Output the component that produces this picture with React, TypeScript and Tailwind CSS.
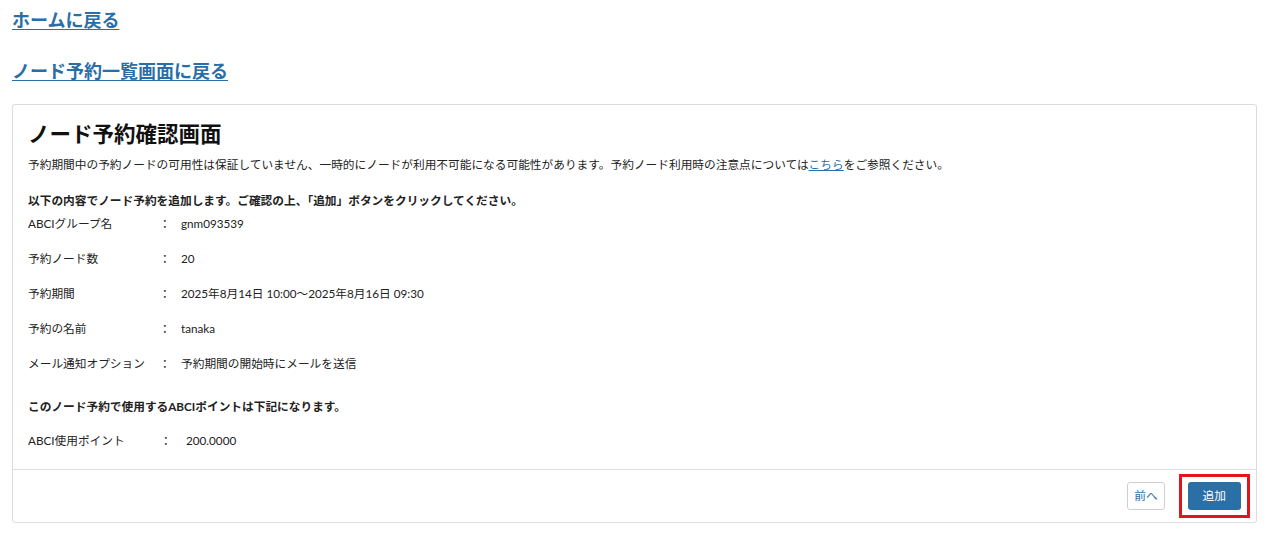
import React from 'react'

const FONT = { fontFamily: "Lato, 'Noto Sans CJK JP', sans-serif" }

const rows: { label: string; value: string }[] = [
  { label: 'ABCIグループ名', value: 'gnm093539' },
  { label: '予約ノード数', value: '20' },
  { label: '予約期間', value: '2025年8月14日 10:00〜2025年8月16日 09:30' },
  { label: '予約の名前', value: 'tanaka' },
  { label: 'メール通知オプション', value: '予約期間の開始時にメールを送信' },
]

function Row({ label, value, wide }: { label: string; value: string; wide?: boolean }) {
  return (
    <div className="flex h-[35px] items-center text-[11.7px] text-[#222]">
      <div className={wide ? 'w-[132px]' : 'w-[131px]'}>{label}</div>
      <div className={wide ? 'w-[26px]' : 'w-[22px]'}>：</div>
      <div>{value}</div>
    </div>
  )
}

export default function App() {
  return (
    <div className="min-h-screen bg-white px-[12px] text-[#222]" style={FONT}>
      <div className="pt-[8px]">
        <a href="#" className="text-[18px] font-bold leading-[24px] text-[#2a6ea8] underline underline-offset-2">
          ホームに戻る
        </a>
      </div>
      <div className="mt-[26px]">
        <a href="#" className="text-[18px] font-bold leading-[24px] text-[#2a6ea8] underline underline-offset-2">
          ノード予約一覧画面に戻る
        </a>
      </div>

      <div className="mt-[20px] rounded-[3px] border border-[#dcdcdc] bg-white">
        <div className="px-[15px] pt-[14px] pb-[11px]">
          <h1 className="text-[21.5px] font-bold leading-[30px] text-[#111]">ノード予約確認画面</h1>
          <p className="mt-[5px] text-[11.7px] leading-[20px] text-[#222]">
            予約期間中の予約ノードの可用性は保証していません、一時的にノードが利用不可能になる可能性があります。予約ノード利用時の注意点については
            <a href="#" className="text-[#2a6ea8] underline">こちら</a>
            をご参照ください。
          </p>
          <p className="mt-[16px] text-[11.7px] font-bold leading-[20px]">
            以下の内容でノード予約を追加します。ご確認の上、「追加」ボタンをクリックしてください。
          </p>
          <div className="-mt-[4px]">
            {rows.map((r) => (
              <Row key={r.label} label={r.label} value={r.value} />
            ))}
          </div>
          <p className="mt-[15px] text-[11.7px] font-bold leading-[20px]">
            このノード予約で使用するABCIポイントは下記になります。
          </p>
          <div className="mt-[7px]">
            <Row label="ABCI使用ポイント" value="200.0000" wide />
          </div>
        </div>
        <div className="flex h-[53px] items-center justify-end gap-[14px] border-t border-[#dcdcdc] pr-[6px]">
          <button className="h-[28px] rounded-[3px] border border-[#cfcfcf] bg-white px-[6px] text-[11.7px] text-[#2a6ea8]">
            前へ
          </button>
          <div className="border-[3px] border-[#e0161c] px-[6px] py-[5px]">
            <button className="h-[28px] rounded-[3px] bg-[#2a6fa6] px-[15px] text-[11.7px] text-white">追加</button>
          </div>
        </div>
      </div>
    </div>
  )
}
